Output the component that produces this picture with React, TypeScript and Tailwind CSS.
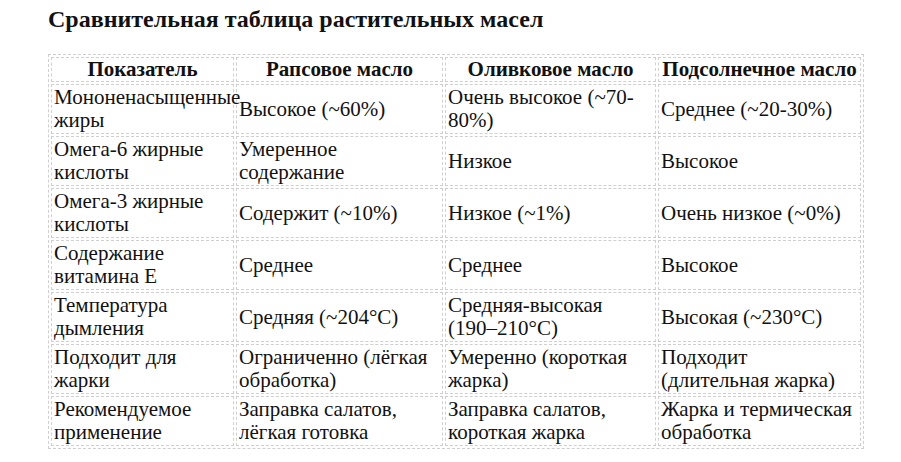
import React from "react";

const headers = ["Показатель", "Рапсовое масло", "Оливковое масло", "Подсолнечное масло"];
const rows: string[][] = [
  ["Мононенасыщенные жиры", "Высокое (~60%)", "Очень высокое (~70-80%)", "Среднее (~20-30%)"],
  ["Омега-6 жирные кислоты", "Умеренное содержание", "Низкое", "Высокое"],
  ["Омега-3 жирные кислоты", "Содержит (~10%)", "Низкое (~1%)", "Очень низкое (~0%)"],
  ["Содержание витамина E", "Среднее", "Среднее", "Высокое"],
  ["Температура дымления", "Средняя (~204°C)", "Средняя-высокая (190–210°C)", "Высокая (~230°C)"],
  ["Подходит для жарки", "Ограниченно (лёгкая обработка)", "Умеренно (короткая жарка)", "Подходит (длительная жарка)"],
  ["Рекомендуемое применение", "Заправка салатов, лёгкая готовка", "Заправка салатов, короткая жарка", "Жарка и термическая обработка"],
];
const widths = ["w-[183px]", "w-[207px]", "w-[211px]", "w-[203px]"];

export default function App() {
  return (
    <div
      className="bg-white text-[#111] pl-[48px] pt-[5px] pb-4 font-[Liberation_Serif]"
      style={{ fontFamily: "'Liberation Serif', 'Times New Roman', serif" }}
    >
      <h1 className="text-[24px] font-bold leading-[28px] mb-[21px]">Сравнительная таблица растительных масел</h1>
      <table className="w-[816px] table-fixed border-separate border-spacing-[2px] border border-dashed border-[#cfcfcf] text-[21px] leading-[23px]">
        <thead>
          <tr>
            {headers.map((h, i) => (
              <th key={i} className={`${widths[i]} border border-dashed border-[#cfcfcf] px-[2px] py-[0px] text-center font-bold`}>{h}</th>
            ))}
          </tr>
        </thead>
        <tbody>
          {rows.map((r, ri) => (
            <tr key={ri}>
              {r.map((c, ci) => (
                <td key={ci} className="border border-dashed border-[#cfcfcf] px-[2px] py-[1px] align-middle text-left">{c}</td>
              ))}
            </tr>
          ))}
        </tbody>
      </table>
    </div>
  );
}
